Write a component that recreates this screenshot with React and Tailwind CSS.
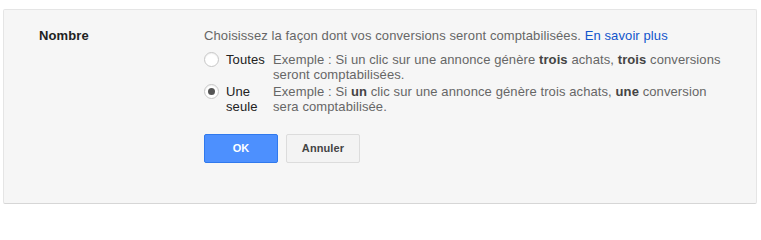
import React from "react";

function Radio({ checked }) {
  return (
    <span className="mt-[0px] flex h-[15px] w-[15px] shrink-0 items-center justify-center rounded-full border border-[#c6c6c6] bg-white shadow-[inset_0_1px_1px_rgba(0,0,0,0.06)]">
      {checked && <span className="h-[7px] w-[7px] rounded-full bg-[#555]" />}
    </span>
  );
}

export default function App() {
  return (
    <div className="h-[209px] w-[761px] bg-white pl-[3px] pt-[9px] font-['Liberation_Sans',Arial,sans-serif] text-[13px] leading-[15px] tracking-[0.1px]">
      <div className="flex h-[195px] w-[754px] rounded-[2px] border border-[#e5e5e5] border-b-[#d6d6d6] bg-[#f6f6f6] pl-[35px] pt-[18px]">
        <div className="w-[165px] font-bold text-[#222]">Nombre</div>
        <div className="flex flex-col">
          <div className="text-[#666]">
            Choisissez la façon dont vos conversions seront comptabilisées.{" "}
            <span className="text-[#15c]">En savoir plus</span>
          </div>
          <div className="mt-[9px] flex flex-col gap-[2px]">
            <div className="flex">
              <Radio />
              <div className="ml-[7px] w-[47px] text-[#222]">Toutes</div>
              <div className="text-[#666]">
                Exemple : Si un clic sur une annonce génère <b className="text-[#444]">trois</b> achats,{" "}
                <b className="text-[#444]">trois</b> conversions
                <br />
                seront comptabilisées.
              </div>
            </div>
            <div className="flex">
              <Radio checked />
              <div className="ml-[7px] w-[47px] text-[#222]">
                Une
                <br />
                seule
              </div>
              <div className="text-[#666]">
                Exemple : Si <b className="text-[#444]">un</b> clic sur une annonce génère trois achats,{" "}
                <b className="text-[#444]">une</b> conversion
                <br />
                sera comptabilisée.
              </div>
            </div>
          </div>
          <div className="mt-[20px] flex gap-[8px]">
            <button className="flex h-[29px] w-[74px] items-center justify-center rounded-[2px] border border-[#3079ed] bg-[#4d90fe] text-[11px] font-bold text-white">
              OK
            </button>
            <button className="flex h-[29px] w-[74px] items-center justify-center rounded-[2px] border border-[#dcdcdc] bg-[#f3f3f3] text-[11px] font-bold text-[#444]">
              Annuler
            </button>
          </div>
        </div>
      </div>
    </div>
  );
}
